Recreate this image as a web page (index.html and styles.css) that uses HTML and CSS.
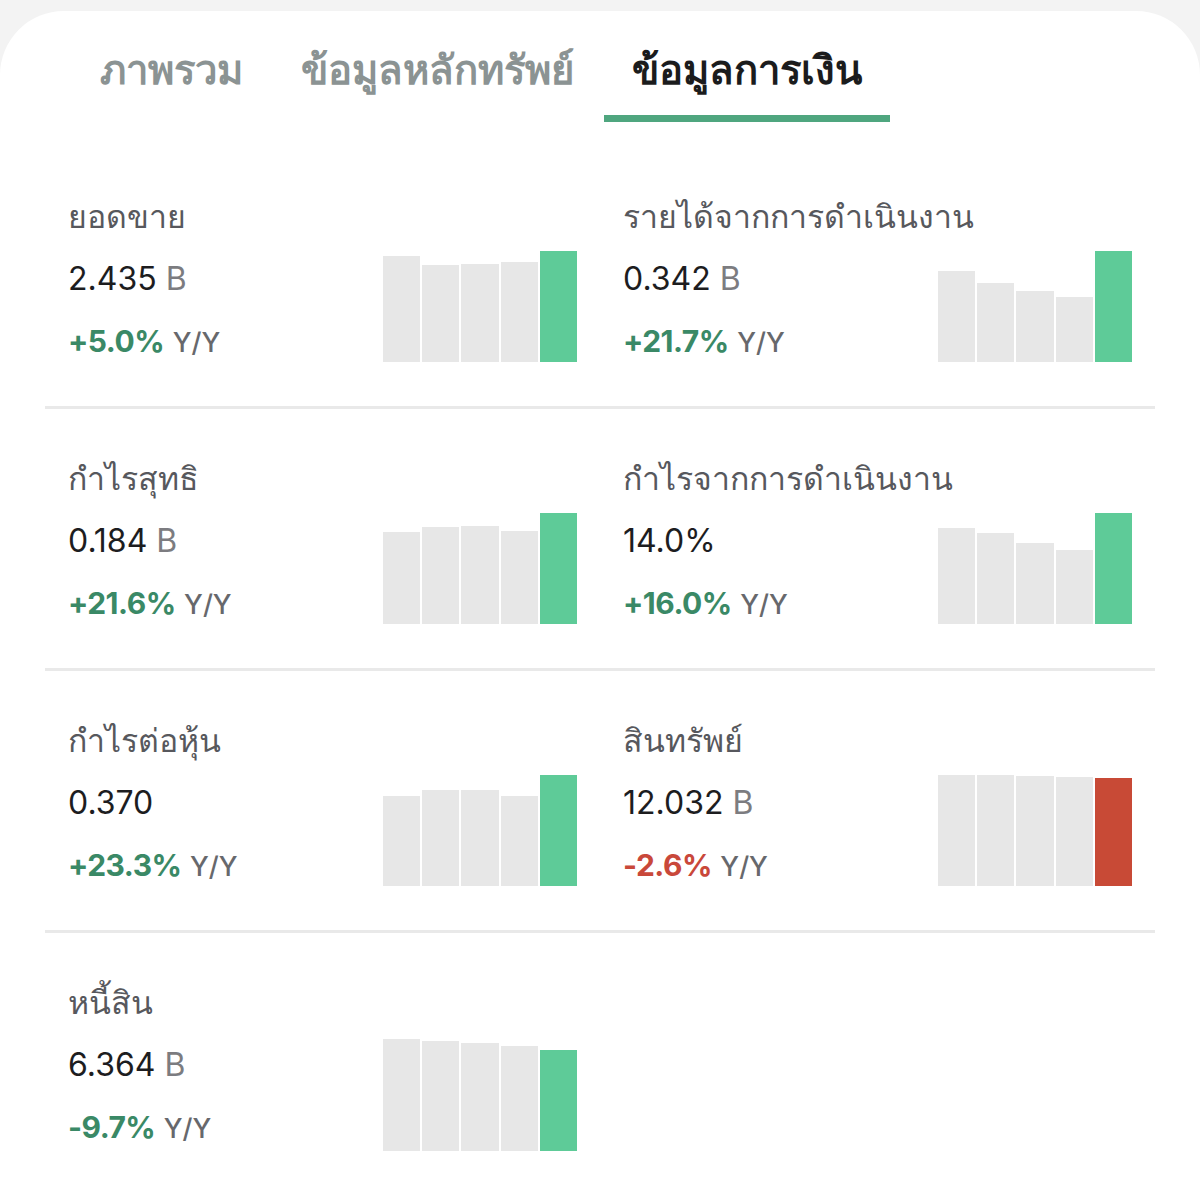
FILE: index.html
```html
<!DOCTYPE html>
<html lang="th">
<head>
<meta charset="utf-8">
<title>ข้อมูลการเงิน</title>
<link rel="stylesheet" href="styles.css">
</head>
<body>
<div class="card">
  <nav class="tabs">
    <div class="tab">ภาพรวม</div>
    <div class="tab">ข้อมูลหลักทรัพย์</div>
    <div class="tab active">ข้อมูลการเงิน</div>
  </nav>
  <div class="grid">
    <div class="row">
      <div class="cell">
        <div class="info">
          <div class="title">ยอดขาย</div>
          <div class="value">2.435 <span class="unit">B</span></div>
          <div class="change"><span class="pct up">+5.0%</span> <span class="yy">Y/Y</span></div>
        </div>
        <div class="chart">
          <div class="bar" style="height:106px"></div>
          <div class="bar" style="height:97px"></div>
          <div class="bar" style="height:98px"></div>
          <div class="bar" style="height:100px"></div>
          <div class="bar green" style="height:111px"></div>
        </div>
      </div>
      <div class="cell">
        <div class="info">
          <div class="title">รายได้จากการดำเนินงาน</div>
          <div class="value">0.342 <span class="unit">B</span></div>
          <div class="change"><span class="pct up">+21.7%</span> <span class="yy">Y/Y</span></div>
        </div>
        <div class="chart">
          <div class="bar" style="height:91px"></div>
          <div class="bar" style="height:79px"></div>
          <div class="bar" style="height:71px"></div>
          <div class="bar" style="height:65px"></div>
          <div class="bar green" style="height:111px"></div>
        </div>
      </div>
    </div>
    <div class="row">
      <div class="cell">
        <div class="info">
          <div class="title">กำไรสุทธิ</div>
          <div class="value">0.184 <span class="unit">B</span></div>
          <div class="change"><span class="pct up">+21.6%</span> <span class="yy">Y/Y</span></div>
        </div>
        <div class="chart">
          <div class="bar" style="height:92px"></div>
          <div class="bar" style="height:97px"></div>
          <div class="bar" style="height:98px"></div>
          <div class="bar" style="height:93px"></div>
          <div class="bar green" style="height:111px"></div>
        </div>
      </div>
      <div class="cell">
        <div class="info">
          <div class="title">กำไรจากการดำเนินงาน</div>
          <div class="value">14.0%</div>
          <div class="change"><span class="pct up">+16.0%</span> <span class="yy">Y/Y</span></div>
        </div>
        <div class="chart">
          <div class="bar" style="height:96px"></div>
          <div class="bar" style="height:91px"></div>
          <div class="bar" style="height:81px"></div>
          <div class="bar" style="height:74px"></div>
          <div class="bar green" style="height:111px"></div>
        </div>
      </div>
    </div>
    <div class="row">
      <div class="cell">
        <div class="info">
          <div class="title">กำไรต่อหุ้น</div>
          <div class="value">0.370</div>
          <div class="change"><span class="pct up">+23.3%</span> <span class="yy">Y/Y</span></div>
        </div>
        <div class="chart">
          <div class="bar" style="height:90px"></div>
          <div class="bar" style="height:96px"></div>
          <div class="bar" style="height:96px"></div>
          <div class="bar" style="height:90px"></div>
          <div class="bar green" style="height:111px"></div>
        </div>
      </div>
      <div class="cell">
        <div class="info">
          <div class="title">สินทรัพย์</div>
          <div class="value">12.032 <span class="unit">B</span></div>
          <div class="change"><span class="pct down">-2.6%</span> <span class="yy">Y/Y</span></div>
        </div>
        <div class="chart">
          <div class="bar" style="height:111px"></div>
          <div class="bar" style="height:111px"></div>
          <div class="bar" style="height:110px"></div>
          <div class="bar" style="height:109px"></div>
          <div class="bar red" style="height:108px"></div>
        </div>
      </div>
    </div>
    <div class="row last">
      <div class="cell">
        <div class="info">
          <div class="title">หนี้สิน</div>
          <div class="value">6.364 <span class="unit">B</span></div>
          <div class="change"><span class="pct up">-9.7%</span> <span class="yy">Y/Y</span></div>
        </div>
        <div class="chart">
          <div class="bar" style="height:112px"></div>
          <div class="bar" style="height:110px"></div>
          <div class="bar" style="height:108px"></div>
          <div class="bar" style="height:105px"></div>
          <div class="bar green" style="height:101px"></div>
        </div>
      </div>
      <div class="cell empty"></div>
    </div>
  </div>
</div>
</body>
</html>
```

FILE: styles.css
```css
* { box-sizing: border-box; }

html, body {
  margin: 0;
  padding: 0;
  background: #f3f3f3;
}

body {
  font-family: "Inter", "Noto Sans", "Liberation Sans", sans-serif;
  padding-top: 11px;
}

.card {
  background: #ffffff;
  border-radius: 64px 64px 0 0;
  min-height: 1181px;
  padding-top: 25px;
}

.tabs {
  display: flex;
  gap: 2px;
  padding-left: 72px;
  height: 86px;
}

.tab {
  height: 86px;
  font-size: 40px;
  font-weight: 600;
  line-height: 68px;
  color: #8b9393;
  padding: 0 28px 11px;
  border-bottom: 7px solid transparent;
  white-space: nowrap;
}

.tab.active {
  color: #1b1c1d;
  font-weight: 700;
  border-bottom-color: #4fa67f;
}

.grid {
  margin: 25px 45px 0;
}

.row {
  display: grid;
  grid-template-columns: 1fr 1fr;
  height: 262px;
  border-bottom: 3px solid #e9e9e9;
}

.row.last {
  border-bottom: none;
}

.cell {
  display: flex;
  justify-content: space-between;
  min-width: 0;
  padding: 39px 23px 34px;
}

.info {
  display: flex;
  flex-direction: column;
  min-width: 0;
  width: 0;
  flex: 1;
}

.title,
.value,
.change {
  height: 62px;
  line-height: 62px;
  white-space: nowrap;
}

.title {
  font-size: 32px;
  font-weight: 500;
  color: #57585d;
}

.value {
  font-size: 32px;
  font-weight: 400;
  color: #1d1d1f;
}

.unit {
  color: #7c7c80;
}

.change {
  font-size: 30px;
}

.pct {
  font-weight: 700;
  letter-spacing: -0.5px;
}

.pct.up { color: #3a8966; }
.pct.down { color: #c9483a; }

.yy {
  font-size: 27px;
  font-weight: 500;
  color: #67686c;
}

.chart {
  flex-shrink: 0;
  align-self: flex-end;
  display: flex;
  align-items: flex-end;
  gap: 2px;
  width: 194px;
  height: 112px;
  margin-bottom: 10px;
}

.bar {
  flex: 1;
  background: #e7e7e7;
}

.bar.green { background: #5ecb98; }
.bar.red { background: #c84a36; }
```
